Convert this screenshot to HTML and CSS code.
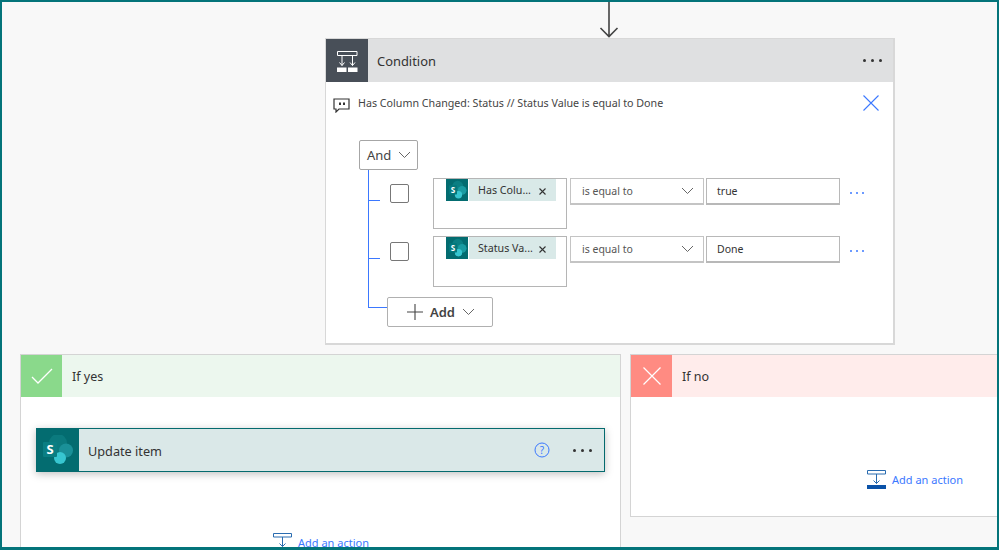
FILE: index.html
```html
<!DOCTYPE html>
<html lang="en">
<head>
<meta charset="utf-8">
<title>Condition</title>
<link rel="stylesheet" href="styles.css">
</head>
<body>
<div class="frame">
  <svg class="arrow" width="20" height="36" viewBox="0 0 20 36"><path d="M10 0V34.500M1.500 26L10 34.500L18.500 26" fill="none" stroke="#444" stroke-width="1.600"/></svg>
  <section class="condition">
    <header class="cond-head">
      <div class="cond-icon">
        <svg width="22" height="22" viewBox="0 0 22 22"><path d="M1.500 1.500H21V5.500H1.500ZM6 5.500V15.500M16.500 5.500V15.500M3.500 12.500L6 15.500L8.500 12.500M14 12.500L16.500 15.500L19 12.500" fill="none" stroke="#fff" stroke-width="1"/><path d="M1 17.500H10.500V22H1ZM12 17.500H21.500V22H12Z" fill="#fff"/></svg>
      </div>
      <span class="cond-title">Condition</span>
      <span class="dots dark"><i></i><i></i><i></i></span>
    </header>
    <div class="comment">
      <svg class="comment-icon" width="17" height="15" viewBox="0 0 17 15"><path d="M1 1H16V11H6L3 14V11H1Z" fill="none" stroke="#333" stroke-width="1.200"/><path d="M6 4.500H8V7H6ZM10 4.500H12V7H10Z" fill="#333"/></svg>
      <span class="comment-text">Has Column Changed: Status // Status Value is equal to Done</span>
      <svg class="close" width="16" height="16" viewBox="0 0 16 16"><path d="M.5 .5L15.500 15.500M15.500 .5L.5 15.500" stroke="#3b78ff" stroke-width="1.100" fill="none"/></svg>
    </div>
    <div class="tree">
      <div class="and-btn"><span>And</span><svg width="13" height="8" viewBox="0 0 13 8"><path d="M1 1L6.500 6.500L12 1" fill="none" stroke="#666" stroke-width="1"/></svg></div>
      <div class="branches">
        <div class="row">
          <span class="tick"></span>
          <span class="check"></span>
          <div class="token-box">
            <div class="token">
              <span class="token-icon"><svg width="22" height="22" viewBox="0 0 30 30"><circle cx="16" cy="10" r="7.500" fill="#0b7f83"/><circle cx="22" cy="15.500" r="6" fill="#1a9ba1"/><circle cx="17" cy="21.500" r="5" fill="#37c6d0"/><rect x="4" y="8.500" width="11" height="12.500" rx="1" fill="#03787c"/><text x="9.500" y="18.500" class="s-letter">S</text></svg></span>
              <span class="token-label">Has Colu...</span>
              <svg class="token-x" width="7" height="7" viewBox="0 0 7 7"><path d="M.5 .5L6.500 6.500M6.500 .5L.5 6.500" stroke="#333" stroke-width="1.100"/></svg>
            </div>
          </div>
          <div class="select"><span>is equal to</span><svg width="13" height="8" viewBox="0 0 13 8"><path d="M1 1L6.500 6.500L12 1" fill="none" stroke="#666" stroke-width="1"/></svg></div>
          <div class="input">true</div>
          <span class="dots blue"><i></i><i></i><i></i></span>
        </div>
        <div class="row last">
          <span class="tick"></span>
          <span class="check"></span>
          <div class="token-box">
            <div class="token">
              <span class="token-icon"><svg width="22" height="22" viewBox="0 0 30 30"><circle cx="16" cy="10" r="7.500" fill="#0b7f83"/><circle cx="22" cy="15.500" r="6" fill="#1a9ba1"/><circle cx="17" cy="21.500" r="5" fill="#37c6d0"/><rect x="4" y="8.500" width="11" height="12.500" rx="1" fill="#03787c"/><text x="9.500" y="18.500" class="s-letter">S</text></svg></span>
              <span class="token-label">Status Va...</span>
              <svg class="token-x" width="7" height="7" viewBox="0 0 7 7"><path d="M.5 .5L6.500 6.500M6.500 .5L.5 6.500" stroke="#333" stroke-width="1.100"/></svg>
            </div>
          </div>
          <div class="select"><span>is equal to</span><svg width="13" height="8" viewBox="0 0 13 8"><path d="M1 1L6.500 6.500L12 1" fill="none" stroke="#666" stroke-width="1"/></svg></div>
          <div class="input">Done</div>
          <span class="dots blue"><i></i><i></i><i></i></span>
        </div>
      </div>
      <div class="add-row">
        <span class="elbow"></span>
        <div class="add-btn">
          <svg width="16" height="16" viewBox="0 0 16 16"><path d="M8 0V16M0 8H16" stroke="#444" stroke-width="1.100"/></svg>
          <span>Add</span>
          <svg width="13" height="8" viewBox="0 0 13 8"><path d="M1 1L6.500 6.500L12 1" fill="none" stroke="#666" stroke-width="1"/></svg>
        </div>
      </div>
    </div>
  </section>
  <div class="outcomes">
    <section class="outcome yes">
      <header class="out-head">
        <span class="out-icon"><svg width="22" height="16" viewBox="0 0 22 16"><path d="M1 9L7 15L21 1" fill="none" stroke="#fff" stroke-width="1.300"/></svg></span>
        <span class="out-title">If yes</span>
      </header>
      <div class="action">
        <span class="action-icon"><svg width="30" height="30" viewBox="0 0 30 30"><circle cx="15" cy="8" r="9" fill="#0b7a7e"/><circle cx="23" cy="15.500" r="7" fill="#1a9098"/><circle cx="17" cy="23" r="6" fill="#37c6d0"/><rect x="0" y="7" width="14" height="15" rx="1" fill="#0a7e83"/><text x="7" y="19" class="s-letter big">S</text></svg></span>
        <span class="action-title">Update item</span>
        <svg class="help" width="16" height="16" viewBox="0 0 16 16"><circle cx="8" cy="8" r="7" fill="none" stroke="#3b78ff" stroke-width="1"/><text x="8" y="11.500" class="help-q">?</text></svg>
        <span class="dots dark"><i></i><i></i><i></i></span>
      </div>
      <div class="add-action center">
        <svg width="19" height="19" viewBox="0 0 19 19"><path d="M.5 .5H18.500V4H.5ZM9.500 4V13.500M6.500 10.500L9.500 13.500L12.500 10.500" fill="none" stroke="#2a6cb0" stroke-width="1"/><rect y="15" width="19" height="4" fill="#0a52a8"/></svg>
        <span>Add an action</span>
      </div>
    </section>
    <section class="outcome no">
      <header class="out-head">
        <span class="out-icon"><svg width="18" height="18" viewBox="0 0 18 18"><path d="M.5 .5L17.500 17.500M17.500 .5L.5 17.500" fill="none" stroke="#fff" stroke-width="1.200"/></svg></span>
        <span class="out-title">If no</span>
      </header>
      <div class="add-action no-pos">
        <svg width="19" height="19" viewBox="0 0 19 19"><path d="M.5 .5H18.500V4H.5ZM9.500 4V13.500M6.500 10.500L9.500 13.500L12.500 10.500" fill="none" stroke="#2a6cb0" stroke-width="1"/><rect y="15" width="19" height="4" fill="#0a52a8"/></svg>
        <span>Add an action</span>
      </div>
    </section>
  </div>
</div>
</body>
</html>
```
FILE: styles.css
```css
* { box-sizing: border-box; }
html, body { margin: 0; padding: 0; }
body { font-family: "Noto Sans", "Open Sans", "Liberation Sans", sans-serif; color: #333; }
.frame { width: 999px; height: 550px; border: 2px solid #04747a; border-bottom-width: 3px; background: #f8f8f8; overflow: hidden; display: flex; flex-direction: column; }
.arrow { display: block; flex: none; margin-left: 597px; }
.condition { flex: none; width: 570px; height: 307px; margin-left: 323px; background: #fff; border: 1px solid #d8d8d8; border-width: 1px 2px 2px 1px; }
.cond-head { height: 43px; background: #dfe0e1; display: flex; align-items: center; }
.cond-icon { width: 42px; height: 43px; background: #484f58; display: flex; align-items: center; justify-content: center; }
.cond-title { margin-left: 9px; font-size: 12.900px; color: #333; flex: 1; }
.dots { display: flex; }
.dots i { display: block; border-radius: 50%; }
.dots.dark { gap: 5px; margin-right: 11px; }
.dots.dark i { width: 3px; height: 3px; background: #333; }
.dots.blue { gap: 4px; margin: 2px 0 0 10px; align-self: center; height: 2px; }
.dots.blue i { width: 2px; height: 2px; background: #3b78ff; }
.row .dots.blue { align-self: flex-start; margin-top: 14px; }
.comment { height: 41px; display: flex; align-items: center; padding-left: 7px; }
.comment-icon { flex: none; margin-top: 6px; }
.comment-text { margin-left: 8px; font-size: 10.700px; color: #444; flex: 1; }
.close { margin-right: 14px; }
.tree { padding-left: 33px; margin-top: 17px; }
.and-btn { width: 59px; height: 30px; background: #fff; border: 1px solid #a6a6a6; border-radius: 2px; display: flex; align-items: center; justify-content: space-between; padding: 0 6px 0 7px; font-size: 13px; color: #444; }
.branches { margin-left: 9px; border-left: 1px solid #3b78ff; padding-top: 8px; }
.row { display: flex; align-items: flex-start; height: 58px; }
.row.last { height: 61px; }
.tick { width: 11px; height: 1px; background: #3b78ff; margin-top: 22px; flex: none; }
.check { width: 19px; height: 19px; border: 1px solid #777; border-radius: 2px; margin: 6px 0 0 10px; flex: none; background: #fff; }
.token-box { width: 134px; height: 51px; margin-left: 24px; border: 1px solid #b5b5b5; flex: none; padding-left: 12px; }
.token { width: 110px; height: 22px; background: linear-gradient(to right, #fff 23px, #d9e9e8 23px); display: flex; align-items: center; font-size: 10.700px; color: #333; }
.token-icon { width: 22px; height: 22px; background: #036c70; flex: none; margin-right: 10px; }
.token-icon svg { display: block; }
.token-label { flex: none; width: 60px; white-space: nowrap; overflow: hidden; }
.token-x { margin: 2px 0 0 1px; flex: none; }
.s-letter { font-family: "Noto Sans", sans-serif; font-size: 11px; font-weight: 700; fill: #fff; text-anchor: middle; }
.s-letter.big { font-size: 13px; }
.select { width: 134px; height: 27px; margin-left: 3px; border: 1px solid #c4c4c4; border-bottom-width: 2px; display: flex; align-items: center; justify-content: space-between; padding: 0 9px 0 11px; font-size: 10.500px; color: #555; flex: none; background: #fff; }
.input { width: 134px; height: 27px; margin-left: 2px; border: 1px solid #b8b8b8; border-bottom-width: 2px; padding-left: 10px; display: flex; align-items: center; font-size: 10.500px; color: #333; flex: none; }
.add-row { display: flex; margin-left: 9px; align-items: flex-start; }
.elbow { width: 19px; height: 11px; border-left: 1px solid #3b78ff; border-bottom: 1px solid #3b78ff; flex: none; }
.add-btn { width: 106px; height: 30px; border: 1px solid #b0b0b0; border-radius: 2px; background: #fff; display: flex; align-items: center; padding-left: 19px; font-size: 13px; font-weight: 600; color: #444; }
.add-btn span { margin: 0 7px 0 7px; }
.outcomes { flex: none; display: flex; align-items: flex-start; margin: 9px 0 0 18px; gap: 9px; }
.outcome { background: #fff; border: 1px solid #d4d4d4; flex: none; }
.yes { width: 601px; height: 200px; }
.no { width: 380px; height: 163px; }
.out-head { height: 42px; display: flex; align-items: center; }
.yes .out-head { background: #ecf7ee; }
.no .out-head { background: #ffeceb; }
.out-icon { width: 41px; height: 42px; display: flex; align-items: center; justify-content: center; }
.yes .out-icon { background: #8ad98b; }
.no .out-icon { background: #ff8b82; }
.out-title { margin-left: 10px; padding-top: 1px; font-size: 12.500px; color: #333; }
.action { width: 569px; height: 44px; margin: 31px 0 0 15px; background: #dae8e8; border: 1.500px solid #046a6e; box-shadow: 0 2px 8px rgba(0,0,0,.25); display: flex; align-items: center; }
.action-icon { width: 42px; height: 42px; background: #036c70; display: flex; align-items: center; justify-content: center; flex: none; }
.action-title { margin-left: 9px; padding-top: 1px; font-size: 12.700px; color: #333; flex: 1; }
.help { margin-right: 23px; }
.help-q { font-family: "Noto Sans", sans-serif; font-size: 10px; fill: #3b78ff; text-anchor: middle; }
.action .dots.dark { margin-right: 12px; }
.add-action { display: flex; align-items: center; gap: 6px; font-size: 11px; color: #3b78ff; white-space: nowrap; }
.center { margin: 61px 0 0 252px; }
.no-pos { margin: 73px 0 0 236px; }
```
